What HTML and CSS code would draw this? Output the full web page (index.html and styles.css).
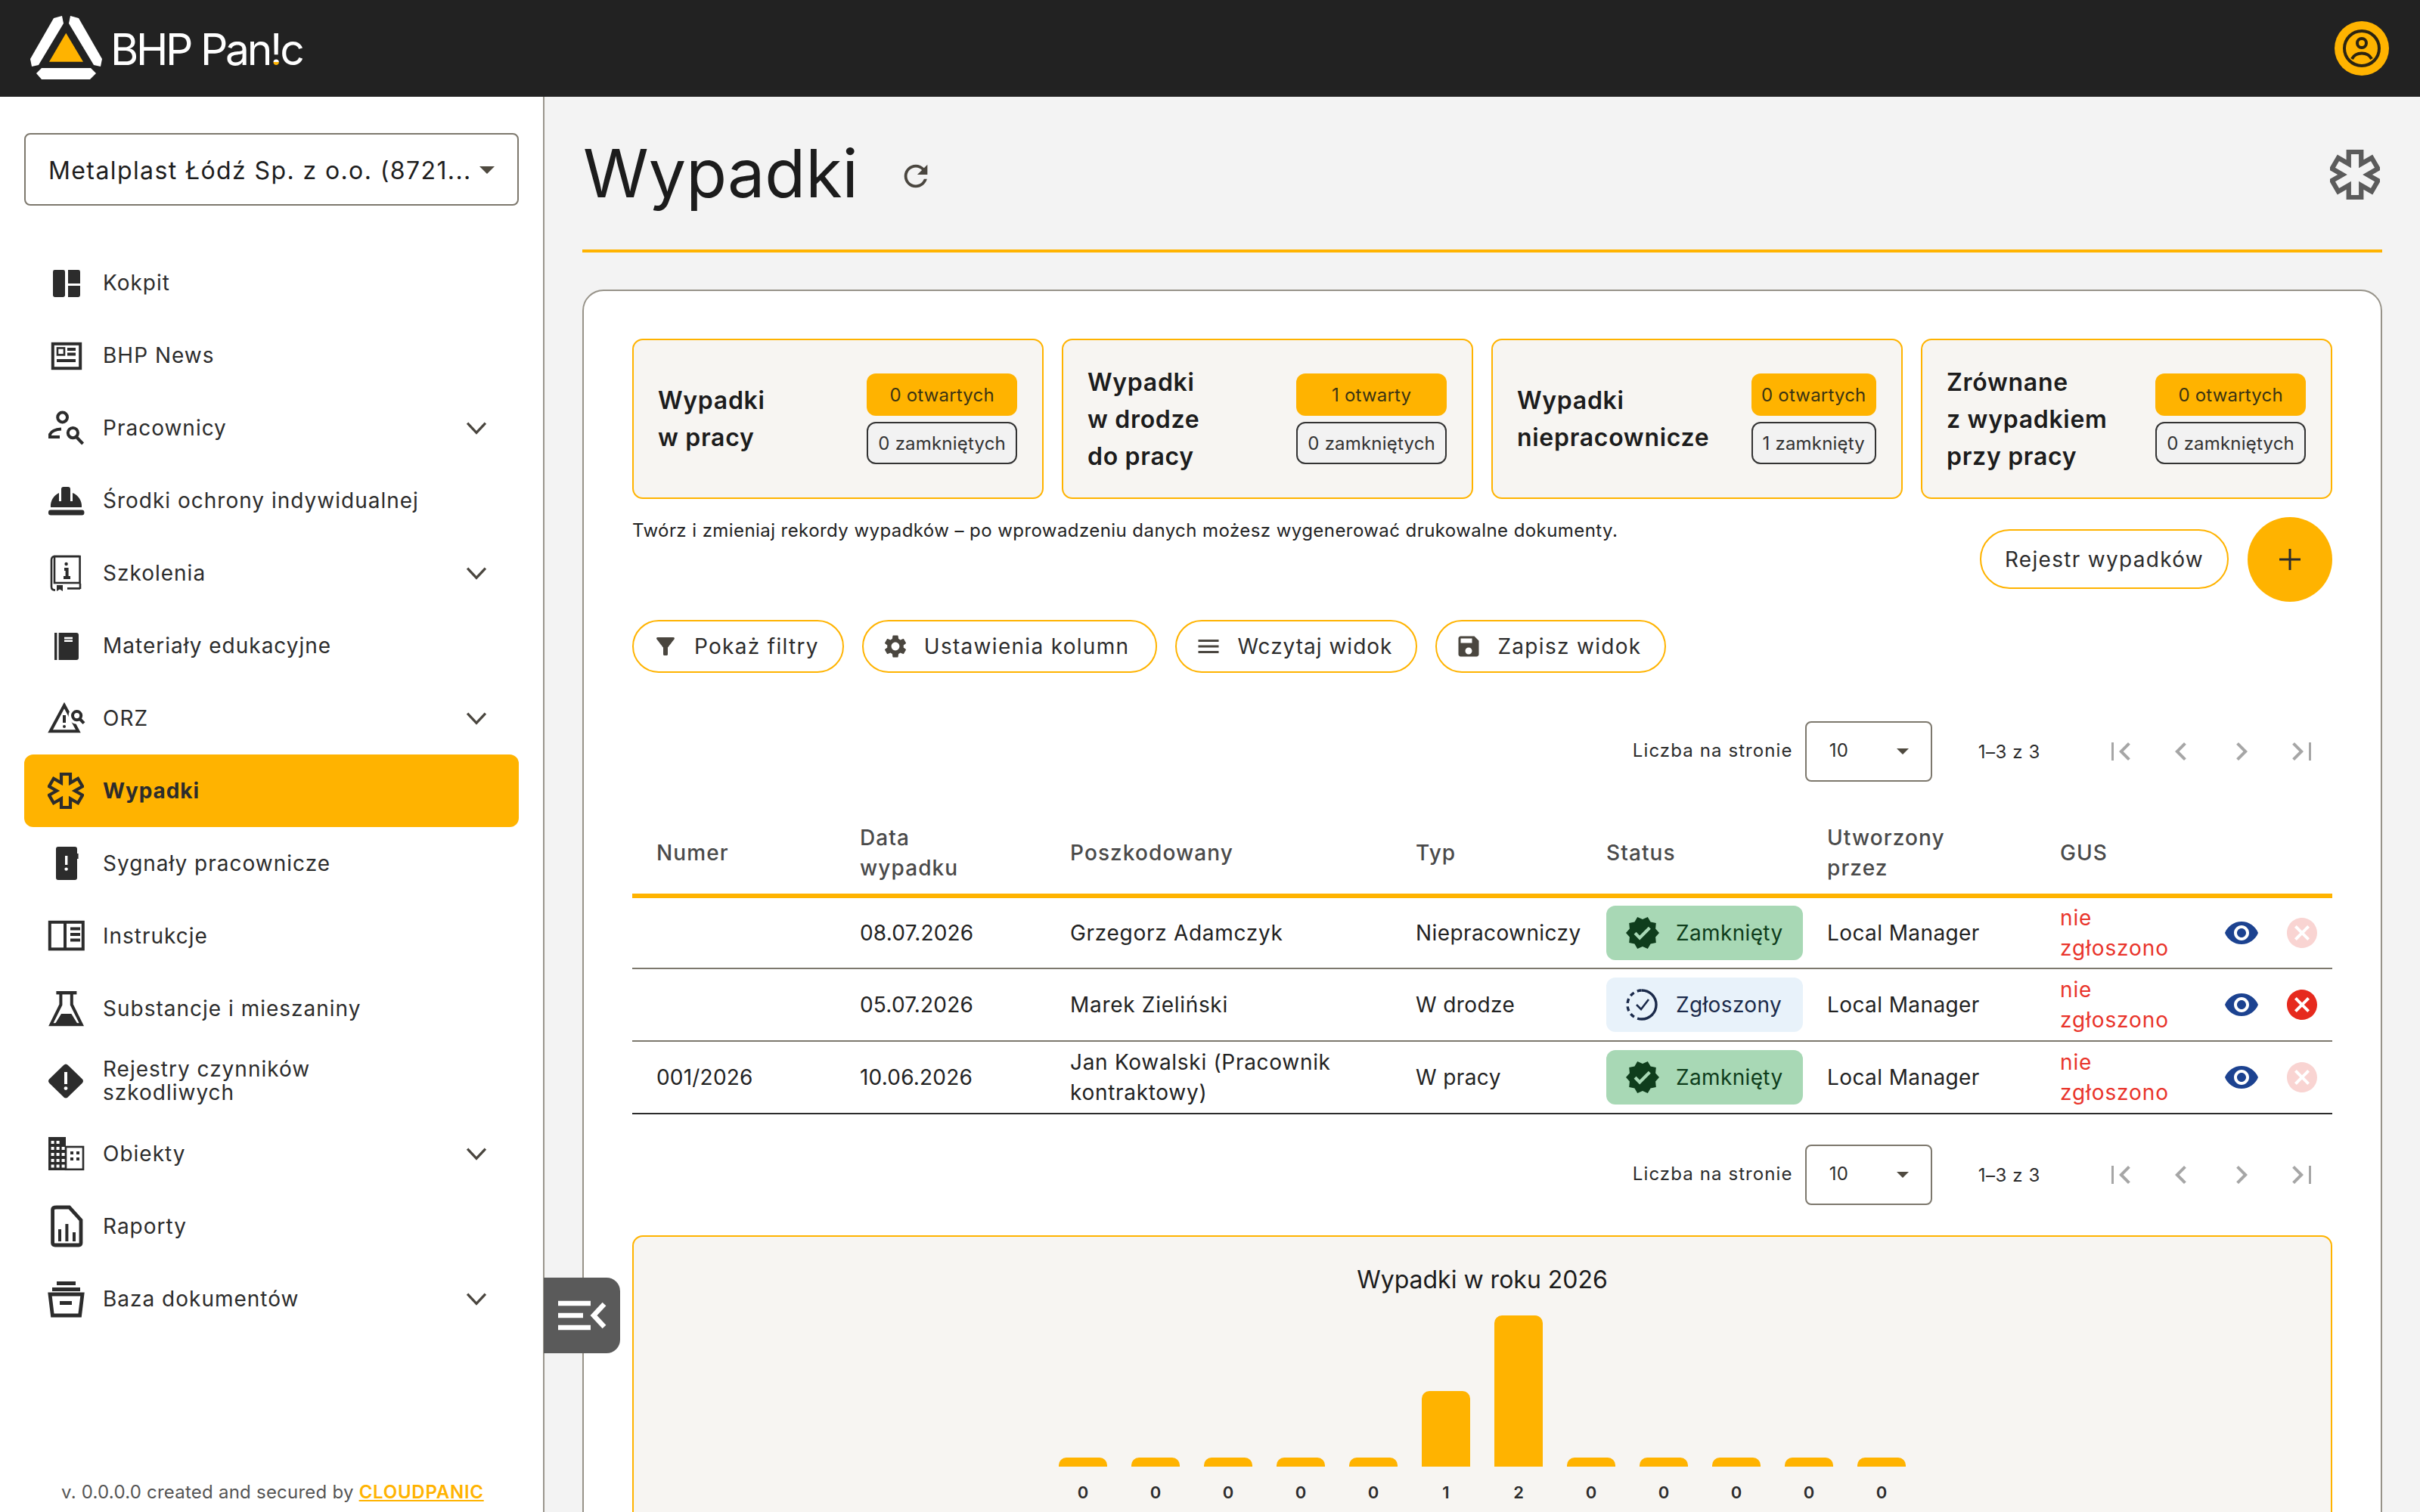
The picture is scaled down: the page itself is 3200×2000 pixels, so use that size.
FILE: index.html
```html
<!DOCTYPE html>
<html lang="pl">
<head>
    <title>Wypadki - BHP Panic</title>
    <link rel="stylesheet" href="styles.css">
    <meta charset="UTF-8">
</head>
<body>
    <svg class="sprite" width="0" height="0">
        <symbol id="i-star" viewBox="0 0 24 24"><path fill="none" stroke="currentColor" d="M9 1H15V6.800L20.030 3.900 23.030 9.100 18 12 23.030 14.900 20.030 20.100 15 17.200V23H9V17.200L3.970 20.100 .970 14.900 6 12 .970 9.100 3.970 3.900 9 6.800Z"/></symbol>
        <symbol id="i-chev" viewBox="0 0 24 24"><path fill="none" stroke="currentColor" stroke-width="1.800" d="M5.500 8.500 12 15.500 18.500 8.500"/></symbol>
        <symbol id="i-first" viewBox="0 0 24 24"><path fill="currentColor" d="M18.410 16.590 13.820 12l4.590-4.590L17 6l-6 6 6 6zM6 6h1.500v12H6z"/></symbol>
        <symbol id="i-prev" viewBox="0 0 24 24"><path fill="currentColor" d="M15.410 7.410 14 6l-6 6 6 6 1.410-1.410L10.830 12z"/></symbol>
        <symbol id="i-next" viewBox="0 0 24 24"><path fill="currentColor" d="M10 6 8.590 7.410 13.170 12l-4.580 4.590L10 18l6-6z"/></symbol>
        <symbol id="i-last" viewBox="0 0 24 24"><path fill="currentColor" d="M5.590 7.410 10.180 12l-4.590 4.590L7 18l6-6-6-6zM16.500 6H18v12h-1.500z"/></symbol>
        <symbol id="i-verified" viewBox="0 0 24 24"><path fill="currentColor" d="M23 12l-2.440-2.790.34-3.690-3.610-.82-1.890-3.200L12 2.960 8.600 1.500 6.710 4.690 3.100 5.500l.34 3.700L1 12l2.440 2.790-.34 3.700 3.610.82L8.600 22.500l3.400-1.470 3.400 1.460 1.890-3.190 3.610-.82-.34-3.690L23 12zm-12.910 4.720-3.800-3.810 1.480-1.480 2.320 2.330 5.850-5.870 1.480 1.480-7.330 7.350z"/></symbol>
        <symbol id="i-eye" viewBox="0 0 24 24"><path fill="currentColor" d="M12 4.500C7 4.500 2.730 7.610 1 12c1.730 4.390 6 7.500 11 7.500s9.270-3.110 11-7.500c-1.730-4.390-6-7.500-11-7.500zM12 17c-2.760 0-5-2.240-5-5s2.240-5 5-5 5 2.240 5 5-2.240 5-5 5zm0-8c-1.660 0-3 1.340-3 3s1.340 3 3 3 3-1.340 3-3-1.340-3-3-3z"/></symbol>
        <symbol id="i-cancel" viewBox="0 0 24 24"><path fill="currentColor" d="M12 2C6.470 2 2 6.470 2 12s4.470 10 10 10 10-4.470 10-10S17.530 2 12 2zm5 13.590L15.590 17 12 13.410 8.410 17 7 15.590 10.590 12 7 8.410 8.410 7 12 10.590 15.590 7 17 8.410 13.410 12 17 15.590z"/></symbol>
    </svg>

    <header class="topbar">
        <a class="brand">
            <svg class="brand-mark" viewBox="38 20 100 88">
                <path fill="#fff" d="M71 25 82 22 84 32 51 87 42 89 40 79Z"/>
                <path fill="#fff" d="M93 22 104 25 135 79 133 89 124 87 91 32Z"/>
                <path fill="#fff" d="M55 91H120L127 98 119 106H55L48 98Z"/>
                <path fill="#ffb300" d="M87.300 44.700 110 82.700H65Z"/>
            </svg>
            <span class="brand-name">BHP Pan<span class="brand-bang">!</span>c</span>
        </a>
        <svg class="avatar" viewBox="0 0 72 72">
            <circle cx="36" cy="36" r="36" fill="#ffb300"/>
            <circle cx="36" cy="36" r="23" fill="none" stroke="#2b2412" stroke-width="4"/>
            <circle cx="36" cy="29" r="6" fill="none" stroke="#2b2412" stroke-width="4"/>
            <path fill="none" stroke="#2b2412" stroke-width="4" d="M23 50C26 44 31 42.500 36 42.500S46 44 49 50"/>
        </svg>
    </header>

    <div class="layout">
        <aside class="sidebar">
            <div class="company-select">
                <span class="company-name">Metalplast Łódź Sp. z o.o. (8721...</span>
                <span class="caret"></span>
            </div>

            <nav class="nav">
                <a class="nav-item">
                    <svg class="nav-icon" viewBox="0 0 24 24"><rect x="3.500" y="3.500" width="8" height="18" rx="1.200"/><path d="M13.500 3.500H20.300Q21.500 3.500 21.500 4.700V12.500H13.500ZM13.500 14H21.500V20.300Q21.500 21.500 20.300 21.500H13.500Z"/></svg>
                    <span>Kokpit</span>
                </a>
                <a class="nav-item">
                    <svg class="nav-icon" viewBox="0 0 24 24"><rect class="line" x="3.400" y="4.400" width="18.200" height="16.200"/><rect class="line thin" x="6.500" y="7.200" width="4.500" height="4.500"/><path class="line" d="M13 8H18.500M13 11.200H18.500M6 15.500H18.500"/></svg>
                    <span>BHP News</span>
                </a>
                <a class="nav-item">
                    <svg class="nav-icon" viewBox="0 0 24 24"><circle class="line" cx="9.800" cy="5" r="3.200"/><path class="line" d="M9 12.700Q3 13 1.500 16.300V18H8"/><circle class="line" cx="16.700" cy="15.300" r="3.300"/><path class="line" d="M19 18 23.300 22.500"/></svg>
                    <span>Pracownicy</span>
                    <svg class="nav-chev"><use href="#i-chev"/></svg>
                </a>
                <a class="nav-item">
                    <svg class="nav-icon" viewBox="0 0 24 24"><path d="M2 16.500A9.500 9.500 0 0 1 7.500 7V12.500H9V4.500Q9 3 10.500 3H13.500Q15 3 15 4.500V12.500H16.500V7A9.500 9.500 0 0 1 22.500 16.500Z"/><rect x=".5" y="18.300" width="23.700" height="3.500" rx="1.500"/></svg>
                    <span>Środki ochrony indywidualnej</span>
                </a>
                <a class="nav-item">
                    <svg class="nav-icon" viewBox="0 0 24 24"><path class="line thin" d="M21 1H4.500Q2.500 1 2.500 3.500V21Q2.500 23.300 5 23.300"/><rect class="line thin" x="4.500" y="1" width="16.800" height="17.500"/><path class="line thin" d="M13 22.200H21.500M21.500 19V22.500"/><path d="M6 20H10V24L8 22.700 6 24Z"/><circle cx="12.300" cy="6" r="1.100"/><path class="line" d="M11 9.500H12.800V15M10.500 15H15"/></svg>
                    <span>Szkolenia</span>
                    <svg class="nav-chev"><use href="#i-chev"/></svg>
                </a>
                <a class="nav-item">
                    <svg class="nav-icon" viewBox="0 0 24 24"><rect x="4.500" y="3.500" width="1.700" height="18"/><path d="M7.300 3.500H19Q20.500 3.500 20.500 5V20Q20.500 21.500 19 21.500H7.300Z"/><path class="line thin white" d="M11 7H16.500M11 8.900H16.500" /></svg>
                    <span>Materiały edukacyjne</span>
                </a>
                <a class="nav-item">
                    <svg class="nav-icon" viewBox="0 0 24 24"><path class="line" d="M11 3.500 1.800 20.600H20.200Z"/><path class="line" d="M11 10V15"/><circle cx="11" cy="17.500" r="1"/><circle class="line halo" cx="19.300" cy="10.300" r="3"/><circle class="line" cx="19.300" cy="10.300" r="2.800"/><path class="line" d="M21.300 12.500 24 15.300"/></svg>
                    <span>ORZ</span>
                    <svg class="nav-chev"><use href="#i-chev"/></svg>
                </a>
                <a class="nav-item is-active">
                    <svg class="nav-icon star"><use href="#i-star"/></svg>
                    <span>Wypadki</span>
                </a>
                <a class="nav-item">
                    <svg class="nav-icon" viewBox="0 0 24 24"><path d="M7 1H18Q19.500 1 19.500 2.500V5.500H20.300V9H19.500V21.500Q19.500 23 18 23H7Q5.500 23 5.500 21.500V2.500Q5.500 1 7 1Z"/><rect class="white" x="11.500" y="7" width="1.700" height="6"/><circle class="white" cx="12.300" cy="15.800" r="1.100"/></svg>
                    <span>Sygnały pracownicze</span>
                </a>
                <a class="nav-item">
                    <svg class="nav-icon" viewBox="0 0 24 24"><rect class="line" x="1.400" y="2.900" width="22" height="17.800"/><path class="line" d="M11.500 3V20.500"/><path class="line" d="M15 7.300H21.500M15 11H21.500M15 14.700H21.500"/></svg>
                    <span>Instrukcje</span>
                </a>
                <a class="nav-item">
                    <svg class="nav-icon" viewBox="0 0 24 24"><rect x="5.700" y=".5" width="13.500" height="2.200"/><path class="line" d="M8.700 2V9.500L2.200 22.600H22.400L15.900 9.500V2"/><path d="M9 15.500H15.700L20 22.500H4.700Z"/></svg>
                    <span>Substancje i mieszaniny</span>
                </a>
                <a class="nav-item">
                    <svg class="nav-icon" viewBox="0 0 24 24"><path d="M12 .7 Q13 .7 14 2 L23 10.800Q24 12 23 13.200L14 22Q13 23.300 12 23.300T10 22L1 13.200Q0 12 1 10.800L10 2Q11 .7 12 .7Z"/><rect class="white" x="11" y="6" width="2" height="8"/><circle class="white" cx="12" cy="16.800" r="1.200"/></svg>
                    <span class="nav-wrap">Rejestry czynników szkodliwych</span>
                </a>
                <a class="nav-item">
                    <svg class="nav-icon" viewBox="0 0 24 24"><rect x=".5" y="1" width="11.500" height="22"/><rect class="line thin" x="12" y="7.500" width="11.500" height="14.900"/><path class="dots" d="M2.300 3.500h2v2h-2zM5.800 3.500h2v2h-2zM2.300 7.500h2v2h-2zM5.800 7.500h2v2h-2zM9.300 7.500h2v2h-2zM2.300 11.500h2v2h-2zM5.800 11.500h2v2h-2zM9.300 11.500h2v2h-2zM2.300 15.500h2v2h-2zM5.800 15.500h2v2h-2zM9.300 15.500h2v2h-2zM2.300 19.300h2v2h-2zM5.800 19.300h2v2h-2zM9.300 19.300h2v2h-2z"/><path d="M15 10.500h2v2h-2zM19 10.500h2v2h-2zM15 14.500h2v2h-2zM19 14.500h2v2h-2z"/></svg>
                    <span>Obiekty</span>
                    <svg class="nav-chev"><use href="#i-chev"/></svg>
                </a>
                <a class="nav-item">
                    <svg class="nav-icon" viewBox="0 0 24 24"><path class="line bold" d="M6 -.5H14.300L22 8V23Q22 24.500 20.500 24.500H5Q3.300 24.500 3.300 23V1Q3.300 -.5 6 -.5Z"/><path d="M7 14H9V22H7ZM11.700 10.500H13.700V22H11.700ZM16.500 16H18.500V22H16.500Z"/></svg>
                    <span>Raporty</span>
                </a>
                <a class="nav-item">
                    <svg class="nav-icon" viewBox="0 0 24 24"><rect x="6" y=".5" width="12.500" height="2.500"/><rect x="3" y="4.500" width="18.500" height="2.500"/><path class="line bold" d="M1.500 9H23L21.300 23H3.200Z"/><rect x="8" y="13.500" width="8" height="2.500"/></svg>
                    <span>Baza dokumentów</span>
                    <svg class="nav-chev"><use href="#i-chev"/></svg>
                </a>
            </nav>

            <div class="version">v. 0.0.0.0 created and secured by <a class="version-link">CLOUDPANIC</a></div>
        </aside>

        <button class="collapse-tab">
            <svg viewBox="0 0 100 100" width="100" height="100"><path fill="none" stroke="#fff" stroke-width="6.500" d="M18 34H61M18 50H51M18 66H61M79 35 65 50 79 65"/></svg>
        </button>

        <main class="content">
            <div class="page-head">
                <h1 class="page-title">Wypadki</h1>
                <svg class="refresh" viewBox="0 0 24 24"><path fill="currentColor" d="M17.650 6.350C16.200 4.900 14.210 4 12 4c-4.420 0-7.990 3.580-7.990 8s3.570 8 7.990 8c3.730 0 6.840-2.550 7.730-6h-2.080c-.82 2.330-3.040 4-5.650 4-3.310 0-6-2.690-6-6s2.690-6 6-6c1.660 0 3.140.69 4.220 1.780L13 11h7V4l-2.350 2.350z"/></svg>
                <svg class="head-star"><use href="#i-star"/></svg>
            </div>

            <section class="card">
                <div class="stats">
                    <div class="stat">
                        <div class="stat-title">Wypadki<br>w pracy</div>
                        <div class="stat-pills"><span class="pill pill-open">0 otwartych</span><span class="pill pill-closed">0 zamkniętych</span></div>
                    </div>
                    <div class="stat">
                        <div class="stat-title">Wypadki<br>w drodze<br>do pracy</div>
                        <div class="stat-pills"><span class="pill pill-open">1 otwarty</span><span class="pill pill-closed">0 zamkniętych</span></div>
                    </div>
                    <div class="stat">
                        <div class="stat-title">Wypadki<br>niepracownicze</div>
                        <div class="stat-pills"><span class="pill pill-open">0 otwartych</span><span class="pill pill-closed">1 zamknięty</span></div>
                    </div>
                    <div class="stat">
                        <div class="stat-title">Zrównane<br>z wypadkiem<br>przy pracy</div>
                        <div class="stat-pills"><span class="pill pill-open">0 otwartych</span><span class="pill pill-closed">0 zamkniętych</span></div>
                    </div>
                </div>

                <div class="intro">
                    <p class="intro-text">Twórz i zmieniaj rekordy wypadków – po wprowadzeniu danych możesz wygenerować drukowalne dokumenty.</p>
                    <button class="btn btn-register">Rejestr wypadków</button>
                    <button class="btn-add"><svg viewBox="0 0 32 32" width="32" height="32"><path fill="none" stroke="#2c2c2c" stroke-width="3" d="M16 2V30M2 16H30"/></svg></button>
                </div>

                <div class="toolbar">
                    <button class="btn btn-tool"><svg class="btn-icon" viewBox="0 0 24 24"><path d="M4.250 5.610C6.270 8.200 10 13 10 13v6c0 .55.45 1 1 1h2c.55 0 1-.45 1-1v-6s3.720-4.800 5.740-7.390c.51-.66.04-1.610-.79-1.610H5.040c-.83 0-1.300.95-.79 1.610z"/></svg>Pokaż filtry</button>
                    <button class="btn btn-tool"><svg class="btn-icon" viewBox="0 0 24 24"><path d="M19.140 12.940c.04-.3.06-.61.06-.94 0-.32-.02-.64-.07-.94l2.030-1.580c.18-.14.23-.41.12-.61l-1.920-3.320c-.12-.22-.37-.29-.59-.22l-2.390.96c-.5-.38-1.030-.7-1.620-.94l-.36-2.540c-.04-.24-.24-.41-.48-.41h-3.840c-.24 0-.43.17-.47.41l-.36 2.540c-.59.24-1.130.57-1.620.94l-2.390-.96c-.22-.08-.47 0-.59.22L2.740 8.870c-.12.21-.08.47.12.61l2.030 1.580c-.05.3-.09.63-.09.94s.02.64.07.94l-2.030 1.580c-.18.14-.23.41-.12.61l1.920 3.320c.12.22.37.29.59.22l2.390-.96c.5.38 1.030.7 1.620.94l.36 2.540c.05.24.24.41.48.41h3.840c.24 0 .44-.17.47-.41l.36-2.540c.59-.24 1.130-.56 1.620-.94l2.390.96c.22.08.47 0 .59-.22l1.920-3.320c.12-.22.07-.47-.12-.61l-2.010-1.580zM12 15.600c-1.980 0-3.600-1.620-3.600-3.600s1.620-3.600 3.600-3.600 3.600 1.620 3.600 3.600-1.620 3.600-3.600 3.600z"/></svg>Ustawienia kolumn</button>
                    <button class="btn btn-tool"><svg class="btn-icon" viewBox="0 0 24 24"><path d="M3 6h18v2H3zM3 11h18v2H3zM3 16h18v2H3z"/></svg>Wczytaj widok</button>
                    <button class="btn btn-tool"><svg class="btn-icon" viewBox="0 0 24 24"><path d="M17 3H5c-1.110 0-2 .9-2 2v14c0 1.100.89 2 2 2h14c1.100 0 2-.9 2-2V7l-4-4zm-5 16c-1.660 0-3-1.340-3-3s1.340-3 3-3 3 1.340 3 3-1.340 3-3 3zm3-10H5V5h10v4z"/></svg>Zapisz widok</button>
                </div>

                <div class="pager">
                    <span class="pager-label">Liczba na stronie</span>
                    <div class="pager-select"><span>10</span><span class="caret"></span></div>
                    <span class="pager-range">1–3 z 3</span>
                    <svg class="pager-btn"><use href="#i-first"/></svg>
                    <svg class="pager-btn"><use href="#i-prev"/></svg>
                    <svg class="pager-btn"><use href="#i-next"/></svg>
                    <svg class="pager-btn"><use href="#i-last"/></svg>
                </div>

                <table class="grid">
                    <colgroup>
                        <col class="c-num"><col class="c-date"><col class="c-person"><col class="c-type"><col class="c-status"><col class="c-author"><col class="c-gus"><col class="c-act">
                    </colgroup>
                    <thead>
                        <tr><th>Numer</th><th>Data<br>wypadku</th><th>Poszkodowany</th><th>Typ</th><th>Status</th><th>Utworzony<br>przez</th><th>GUS</th><th></th></tr>
                    </thead>
                    <tbody>
                        <tr>
                            <td></td><td>08.07.2026</td><td>Grzegorz Adamczyk</td><td>Niepracowniczy</td>
                            <td><span class="chip chip-closed"><svg class="chip-icon"><use href="#i-verified"/></svg>Zamknięty</span></td>
                            <td>Local Manager</td><td class="gus">nie<br>zgłoszono</td>
                            <td class="actions"><svg class="act eye"><use href="#i-eye"/></svg><svg class="act del off"><use href="#i-cancel"/></svg></td>
                        </tr>
                        <tr>
                            <td></td><td>05.07.2026</td><td>Marek Zieliński</td><td>W drodze</td>
                            <td><span class="chip chip-new"><svg class="chip-icon" viewBox="0 0 24 24"><path fill="none" stroke="currentColor" stroke-width="1.700" d="M11.500 2.500A9.500 9.500 0 0 1 11.500 21.500"/><path fill="none" stroke="currentColor" stroke-width="1.700" stroke-dasharray="3 2.300" d="M11.500 21.500A9.500 9.500 0 0 1 11.500 2.500"/><path fill="none" stroke="currentColor" stroke-width="1.300" d="M8 12 11 15 16 8.500"/></svg>Zgłoszony</span></td>
                            <td>Local Manager</td><td class="gus">nie<br>zgłoszono</td>
                            <td class="actions"><svg class="act eye"><use href="#i-eye"/></svg><svg class="act del"><use href="#i-cancel"/></svg></td>
                        </tr>
                        <tr class="last">
                            <td>001/2026</td><td>10.06.2026</td><td>Jan Kowalski (Pracownik kontraktowy)</td><td>W pracy</td>
                            <td><span class="chip chip-closed"><svg class="chip-icon"><use href="#i-verified"/></svg>Zamknięty</span></td>
                            <td>Local Manager</td><td class="gus">nie<br>zgłoszono</td>
                            <td class="actions"><svg class="act eye"><use href="#i-eye"/></svg><svg class="act del off"><use href="#i-cancel"/></svg></td>
                        </tr>
                    </tbody>
                </table>

                <div class="pager pager-bottom">
                    <span class="pager-label">Liczba na stronie</span>
                    <div class="pager-select"><span>10</span><span class="caret"></span></div>
                    <span class="pager-range">1–3 z 3</span>
                    <svg class="pager-btn"><use href="#i-first"/></svg>
                    <svg class="pager-btn"><use href="#i-prev"/></svg>
                    <svg class="pager-btn"><use href="#i-next"/></svg>
                    <svg class="pager-btn"><use href="#i-last"/></svg>
                </div>

                <div class="chart">
                    <div class="chart-title">Wypadki w roku 2026</div>
                    <div class="bars">
                        <div class="bar-col"><div class="bar" style="height:12px"></div><span>0</span></div>
                        <div class="bar-col"><div class="bar" style="height:12px"></div><span>0</span></div>
                        <div class="bar-col"><div class="bar" style="height:12px"></div><span>0</span></div>
                        <div class="bar-col"><div class="bar" style="height:12px"></div><span>0</span></div>
                        <div class="bar-col"><div class="bar" style="height:12px"></div><span>0</span></div>
                        <div class="bar-col"><div class="bar" style="height:100px"></div><span>1</span></div>
                        <div class="bar-col"><div class="bar" style="height:200px"></div><span>2</span></div>
                        <div class="bar-col"><div class="bar" style="height:12px"></div><span>0</span></div>
                        <div class="bar-col"><div class="bar" style="height:12px"></div><span>0</span></div>
                        <div class="bar-col"><div class="bar" style="height:12px"></div><span>0</span></div>
                        <div class="bar-col"><div class="bar" style="height:12px"></div><span>0</span></div>
                        <div class="bar-col"><div class="bar" style="height:12px"></div><span>0</span></div>
                    </div>
                </div>
            </section>
        </main>
    </div>
</body>
</html>
```

FILE: styles.css
```css
:root {
    --orange: #ffb300;
    --ink: #2c2c2c;
    --line: #7d786d;
    --soft: #f7f5f2;
}

* {
    box-sizing: border-box;
}

body {
    margin: 0;
    height: 100vh;
    overflow: hidden;
    display: flex;
    flex-direction: column;
    background: #f3f3f3;
    color: var(--ink);
    font-family: Inter, "Noto Sans", sans-serif;
    font-size: 28px;
}

button {
    font: inherit;
    color: inherit;
}

.sprite {
    position: absolute;
}

/* top bar */
.topbar {
    height: 128px;
    flex: none;
    background: #222;
    display: flex;
    align-items: center;
    justify-content: space-between;
    padding: 0 41px 0 38px;
}

.brand {
    display: flex;
    align-items: center;
    gap: 8px;
}

.brand-mark {
    width: 100px;
    height: 88px;
    margin-top: -2px;
}

.brand-name {
    font-size: 57px;
    letter-spacing: -3.300px;
    color: #fff;
    line-height: 1;
    margin-top: 2px;
}

.brand-bang {
    background: linear-gradient(#fff 74%, var(--orange) 74%);
    -webkit-background-clip: text;
    background-clip: text;
    color: transparent;
}

.avatar {
    width: 72px;
    height: 72px;
}

/* sidebar */
.layout {
    flex: 1;
    display: flex;
    min-height: 0;
    position: relative;
}

.sidebar {
    width: 720px;
    flex: none;
    background: #fff;
    border-right: 2px solid #9a968d;
    padding: 48px 32px 0;
    display: flex;
    flex-direction: column;
}

.company-select {
    height: 96px;
    border: 2px solid var(--line);
    border-radius: 8px;
    padding: 2px 30px 0 30px;
    display: flex;
    align-items: center;
    justify-content: space-between;
    font-size: 32px;
    letter-spacing: 1.400px;
    color: #1e1e1e;
    flex: none;
}

.caret {
    display: inline-block;
    width: 0;
    height: 0;
    border-left: 10px solid transparent;
    border-right: 10px solid transparent;
    border-top: 10px solid #4f4a40;
}

.nav {
    margin-top: 54px;
    display: flex;
    flex-direction: column;
}

.nav-item {
    height: 96px;
    display: flex;
    align-items: center;
    padding: 0 34px 0 31px;
    gap: 25px;
    border-radius: 12px;
    letter-spacing: 1px;
    line-height: 31px;
}

.nav-item.is-active {
    background: var(--orange);
    font-weight: 700;
    letter-spacing: .9px;
}

.nav-wrap {
    max-width: 430px;
}

.nav-icon {
    width: 48px;
    height: 48px;
    flex: none;
    fill: var(--ink);
    color: var(--ink);
    overflow: visible;
}

.nav-icon .line {
    fill: none;
    stroke: var(--ink);
    stroke-width: 2;
}

.nav-icon .thin {
    stroke-width: 1.300;
}

.nav-icon .bold {
    stroke-width: 2.400;
}

.nav-icon .white,
.nav-icon .dots {
    fill: #fff;
}

.nav-icon .line.white {
    fill: none;
    stroke: #fff;
}

.nav-icon .halo {
    stroke: #fff;
    stroke-width: 5;
    fill: #fff;
}

.nav-icon.star {
    stroke-width: 2.100;
}

.nav-chev {
    width: 44px;
    height: 44px;
    margin-left: auto;
    flex: none;
    color: #4a463f;
}

.version {
    margin-top: auto;
    padding: 0 0 12px 49px;
    font-size: 24px;
    line-height: 28px;
    color: #555;
    white-space: nowrap;
    letter-spacing: .23px;
}

.version-link {
    color: var(--orange);
    font-weight: 600;
    letter-spacing: .75px;
    text-decoration: underline;
}

.collapse-tab {
    position: absolute;
    left: 719px;
    top: 1562px;
    width: 101px;
    height: 100px;
    padding: 0;
    border: 0;
    background: #5a5a5a;
    border-radius: 0 18px 18px 0;
    display: flex;
    align-items: center;
    justify-content: center;
}

/* main column */
.content {
    flex: 1;
    min-width: 0;
    padding: 0 50px;
}

.page-head {
    height: 206px;
    border-bottom: 4px solid var(--orange);
    display: flex;
    align-items: center;
    padding: 0 0 0 1px;
}

.page-title {
    margin: 0;
    font-size: 88px;
    font-weight: 400;
    line-height: 106px;
    color: #1c1c1c;
}

.refresh {
    width: 46px;
    height: 46px;
    margin: 8px 0 0 53px;
    color: #4a463f;
}

.head-star {
    width: 66px;
    height: 66px;
    margin: 4px 3px 0 auto;
    color: #5b5b5b;
    stroke-width: 2.300;
}

.card {
    margin-top: 49px;
    background: #fff;
    border: 2px solid #979389;
    border-radius: 28px;
    padding: 63px 64px 0;
    height: 1700px;
}

/* stat boxes */
.stats {
    display: grid;
    grid-template-columns: repeat(4, 1fr);
    gap: 24px;
}

.stat {
    height: 212px;
    background: var(--soft);
    border: 2px solid var(--orange);
    border-radius: 14px;
    padding: 0 33px 0 32px;
    display: flex;
    align-items: center;
    justify-content: space-between;
}

.stat-title {
    font-size: 32px;
    font-weight: 600;
    line-height: 49px;
    letter-spacing: .7px;
    color: #1c1c1c;
}

.stat-pills {
    display: grid;
    gap: 8px;
}

.pill {
    height: 56px;
    padding: 0 13px;
    border-radius: 12px;
    display: flex;
    align-items: center;
    justify-content: center;
    font-size: 24px;
    letter-spacing: .2px;
}

.pill-open {
    background: var(--orange);
    color: #3b3413;
}

.pill-closed {
    background: #f2f2f2;
    border: 2px solid #333;
    color: #333;
}

/* intro line and buttons */
.intro {
    display: flex;
    align-items: flex-start;
    margin-top: 24px;
    height: 112px;
}

.intro-text {
    margin: 0 auto 0 0;
    font-size: 24px;
    line-height: 36px;
    letter-spacing: .43px;
    color: #222;
}

.btn {
    height: 70px;
    border: 2px solid var(--orange);
    border-radius: 35px;
    background: #fff;
    display: inline-flex;
    align-items: center;
    padding: 0 32px;
    letter-spacing: 1.300px;
    white-space: nowrap;
}

.btn-register {
    height: 79px;
    border-radius: 40px;
    margin-top: 16px;
    width: 329px;
    justify-content: center;
    padding: 0;
}

.btn-add {
    width: 112px;
    height: 112px;
    border-radius: 50%;
    border: 0;
    background: var(--orange);
    margin-left: 25px;
    padding: 0;
    display: flex;
    align-items: center;
    justify-content: center;
}

.toolbar {
    display: flex;
    gap: 24px;
    margin-top: 24px;
}

.btn-tool {
    padding: 0 31px 0 24px;
}

.btn-tool:nth-child(2) {
    padding-right: 35px;
}

.btn-tool:nth-child(3) {
    letter-spacing: 1px;
}

.btn-icon {
    width: 36px;
    height: 36px;
    margin-right: 20px;
    fill: #4a463f;
}

/* pagination */
.pager {
    display: flex;
    align-items: center;
    justify-content: flex-end;
    margin-top: 64px;
    height: 80px;
    font-size: 24px;
    letter-spacing: .4px;
}

.pager-bottom {
    margin-top: 40px;
}

.pager-label {
    letter-spacing: 1.100px;
    margin-top: -3px;
}

.pager-select {
    width: 168px;
    height: 80px;
    margin-left: 16px;
    border: 2px solid var(--line);
    border-radius: 8px;
    display: flex;
    align-items: center;
    justify-content: space-between;
    padding: 0 30px 3px;
}

.pager-select .caret {
    border-left-width: 8px;
    border-right-width: 8px;
    border-top-width: 8px;
    margin: 3px -1px 0 0;
}

.pager-range {
    margin-left: 61px;
    margin-right: 66px;
    letter-spacing: .6px;
}

.pager-btn {
    width: 80px;
    height: 48px;
    color: #a6a6a6;
}

/* table */
.grid {
    width: 100%;
    table-layout: fixed;
    border-collapse: collapse;
    margin-top: 39px;
}

.c-num { width: 301px; }
.c-date { width: 278px; }
.c-person { width: 457px; }
.c-type { width: 252px; }
.c-status { width: 292px; }
.c-author { width: 308px; }
.c-gus { width: 200px; }
.c-act { width: 160px; }

.grid th {
    height: 112px;
    padding: 0 16px 0 0;
    text-align: left;
    font-weight: 500;
    line-height: 40px;
    color: #4a4a4a;
    letter-spacing: 1.100px;
    border-bottom: 6px solid var(--orange);
}

.grid td {
    height: 96px;
    padding: 0 16px 0 0;
    line-height: 40px;
    letter-spacing: .4px;
    border-bottom: 2px solid var(--line);
    color: #222;
}

.grid td:nth-child(-n+2) {
    letter-spacing: .2px;
}

.grid td:nth-child(3) {
    letter-spacing: .7px;
}

.grid tr.last td {
    border-bottom-color: #2c2c2c;
}

.grid th:first-child,
.grid td:first-child {
    padding-left: 32px;
}

.grid td.gus {
    color: #e9342b;
    letter-spacing: .9px;
}

.grid td.actions {
    padding: 0;
}

.actions {
    font-size: 0;
}

.act {
    width: 48px;
    height: 48px;
    margin: 0 16px;
    vertical-align: middle;
}

.eye {
    color: #1c4290;
}

.del {
    color: #e62a1e;
}

.del.off {
    color: #f9d4d2;
}

.chip {
    width: 260px;
    height: 72px;
    border-radius: 12px;
    display: flex;
    align-items: center;
    padding-left: 24px;
    gap: 20px;
    letter-spacing: .35px;
}

.chip-closed {
    background: #a8d8b5;
    color: #0f3d1c;
}

.chip-new {
    background: #e8f2fa;
    color: #1b2a4a;
}

.chip-icon {
    width: 48px;
    height: 48px;
    flex: none;
}

/* chart */
.chart {
    margin-top: 40px;
    height: 420px;
    background: var(--soft);
    border: 2px solid var(--orange);
    border-radius: 14px;
    padding-top: 37px;
    display: flex;
    flex-direction: column;
    align-items: center;
}

.chart-title {
    font-size: 32px;
    line-height: 40px;
    color: #1c1c1c;
}

.bars {
    display: flex;
    align-items: flex-end;
    gap: 32px;
    margin-top: 27px;
    height: 248px;
}

.bar-col {
    width: 64px;
    display: flex;
    flex-direction: column;
    align-items: center;
}

.bar {
    width: 100%;
    background: var(--orange);
    border-radius: 10px 10px 0 0;
}

.bar-col span {
    margin-top: 20px;
    font-size: 22px;
    font-weight: 600;
    line-height: 28px;
}
```
